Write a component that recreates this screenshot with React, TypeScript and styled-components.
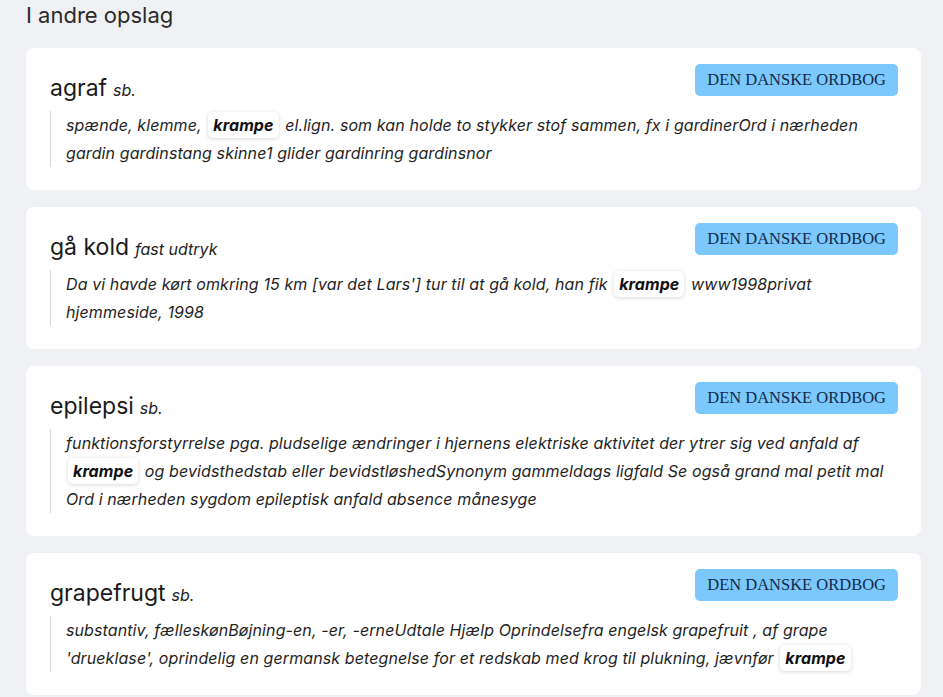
import React from "react";
import styled, { createGlobalStyle } from "styled-components";

const Global = createGlobalStyle`
  html, body { margin: 0; padding: 0; background: #f0f1f5; }
  body { font-family: Inter, "Noto Sans", sans-serif; color: #1f1f1f; }
  * { box-sizing: border-box; }
`;

const Page = styled.div`
  padding: 2px 22px 0 26px;
`;

const Heading = styled.h2`
  margin: 0 0 20px;
  font-size: 22px;
  line-height: 26px;
  font-weight: 400;
  color: #2a2a2a;
`;

const List = styled.div`
  display: flex;
  flex-direction: column;
  gap: 17px;
`;

const Card = styled.section`
  background: #fff;
  border-radius: 8px;
  padding: 16px 23px 23px 24px;
`;

const Header = styled.div`
  display: flex;
  justify-content: space-between;
  align-items: flex-start;
  height: 32px;
`;

const Title = styled.h3`
  margin: 10px 0 0;
  font-size: 23px;
  line-height: 28px;
  font-weight: 400;
  color: #1a1a1a;
`;

const Pos = styled.span`
  font-size: 16px;
  font-style: italic;
  margin-left: 6px;
  color: #222;
`;

const Badge = styled.span`
  display: inline-flex;
  align-items: center;
  height: 32px;
  padding: 0 12px;
  border-radius: 5px;
  background: #7ac8fc;
  color: #15284a;
  font-family: "Liberation Serif", "DejaVu Serif", serif;
  font-size: 16.5px;
`;

const Quote = styled.blockquote`
  margin: 15px 0 0;
  padding-left: 15px;
  border-left: 1px solid #d6d8de;
  font-size: 16px;
  line-height: 28px;
  font-style: italic;
  letter-spacing: 0.1px;
  color: #1f1f1f;
`;

const Hit = styled.b`
  display: inline-block;
  line-height: 20px;
  padding: 3px 5px;
  margin: 0 2px;
  background: #fff;
  border-radius: 5px;
  box-shadow: 0 1px 4px rgba(0, 0, 0, 0.16);
  font-weight: 700;
  color: #111;
`;

type Entry = { word: string; pos: string; parts: (string | null)[] };

const entries: Entry[] = [
  {
    word: "agraf",
    pos: "sb.",
    parts: [
      "spænde, klemme, ",
      null,
      " el.lign. som kan holde to stykker stof sammen, fx i gardinerOrd i nærheden gardin gardinstang skinne1 glider gardinring gardinsnor",
    ],
  },
  {
    word: "gå kold",
    pos: "fast udtryk",
    parts: [
      "Da vi havde kørt omkring 15 km [var det Lars'] tur til at gå kold, han fik ",
      null,
      " www1998privat hjemmeside, 1998",
    ],
  },
  {
    word: "epilepsi",
    pos: "sb.",
    parts: [
      "funktionsforstyrrelse pga. pludselige ændringer i hjernens elektriske aktivitet der ytrer sig ved anfald af ",
      null,
      " og bevidsthedstab eller bevidstløshedSynonym gammeldags ligfald Se også grand mal petit mal Ord i nærheden sygdom epileptisk anfald absence månesyge",
    ],
  },
  {
    word: "grapefrugt",
    pos: "sb.",
    parts: [
      "substantiv, fælleskønBøjning-en, -er, -erneUdtale  Hjælp Oprindelsefra engelsk grapefruit , af grape 'drueklase', oprindelig en germansk betegnelse for et redskab med krog til plukning, jævnfør ",
      null,
    ],
  },
];

export default function App() {
  return (
    <>
      <Global />
      <Page>
        <Heading>I andre opslag</Heading>
        <List>
          {entries.map((e) => (
            <Card key={e.word}>
              <Header>
                <Title>
                  {e.word}
                  <Pos>{e.pos}</Pos>
                </Title>
                <Badge>DEN DANSKE ORDBOG</Badge>
              </Header>
              <Quote>
                {e.parts.map((p, i) =>
                  p === null ? <Hit key={i}>krampe</Hit> : <React.Fragment key={i}>{p}</React.Fragment>
                )}
              </Quote>
            </Card>
          ))}
        </List>
      </Page>
    </>
  );
}
